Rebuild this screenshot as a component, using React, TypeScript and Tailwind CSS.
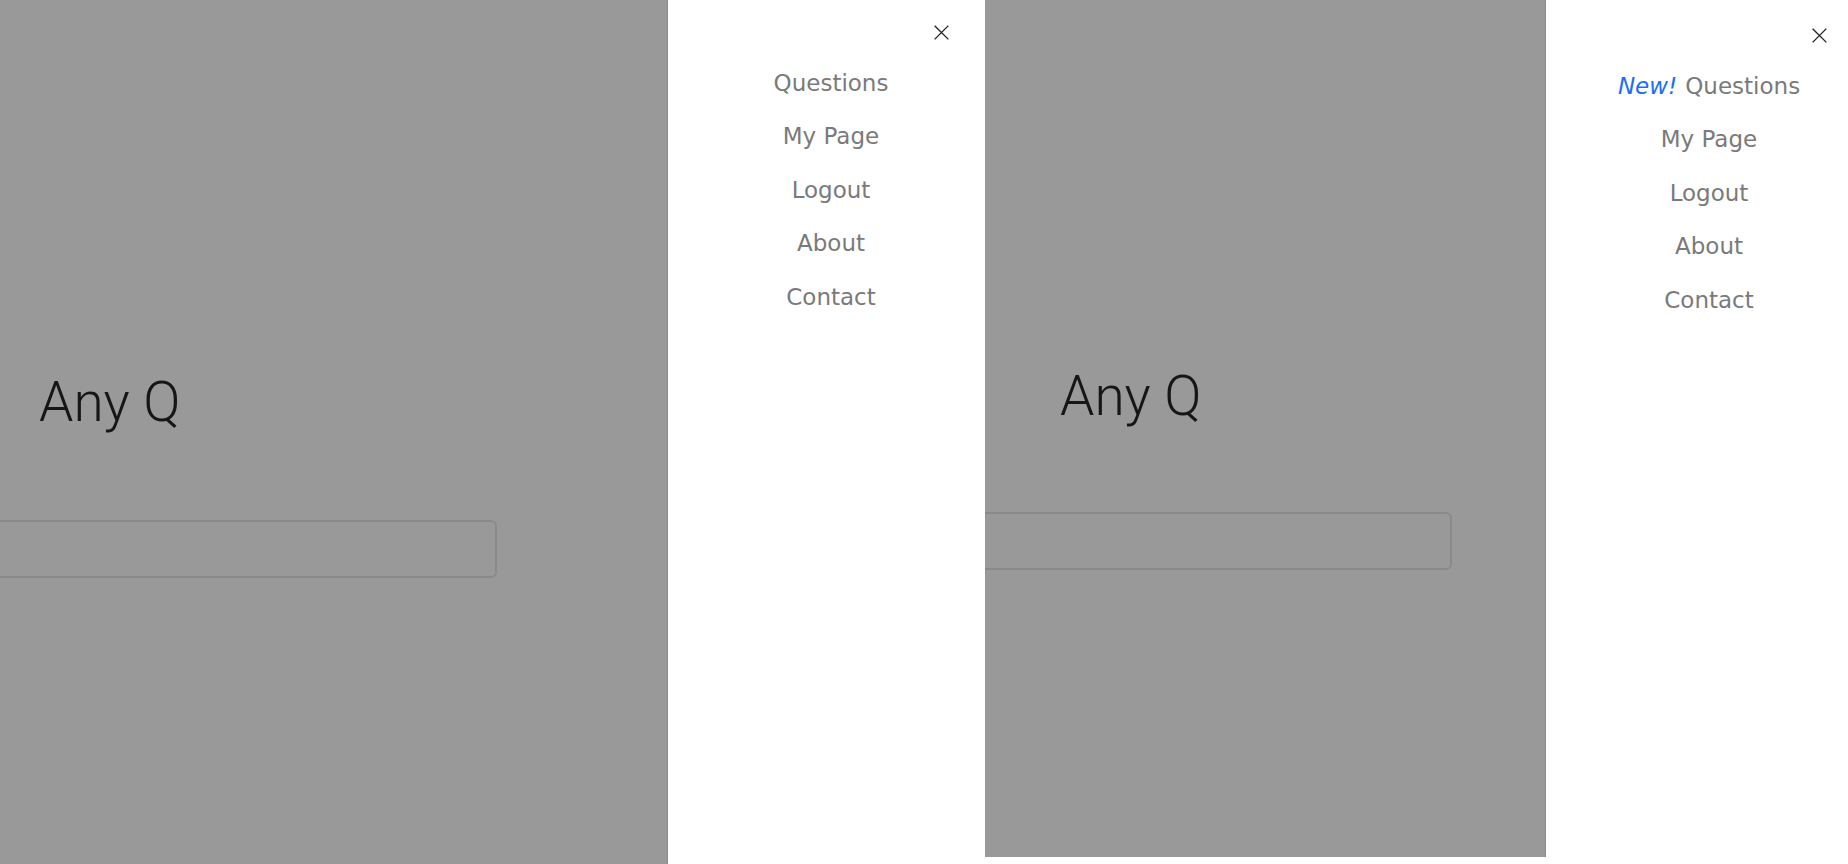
// Two side-by-side captures of the same page with the side drawer open

const links = ["Questions", "My Page", "Logout", "About", "Contact"];

function CloseIcon() {
  return (
    <svg width="17" height="17" viewBox="0 0 16 16" fill="none">
      <path d="M2 2L14 14M14 2L2 14" stroke="#222" strokeWidth="1.3" strokeLinecap="square" />
    </svg>
  );
}

function Drawer({ showNew, top }: { showNew?: boolean; top: number }) {
  return (
    <div className="shrink-0 w-[318px] h-full bg-white border-l border-[#8a8a8a] relative font-['DejaVu_Sans',Verdana,sans-serif]">
      {/* close button */}
      <div className="absolute right-[35px]" style={{ top: top - 33 }}>
        <CloseIcon />
      </div>
      <ul className="flex flex-col items-center pl-[9px]" style={{ paddingTop: top }}>
        {links.map((label, i) => (
          <li key={label} className="leading-[53.4px] text-[23px] text-[#7a7a7a]">
            {i === 0 && showNew && <em className="text-[#1a6ef8] mr-[8px]">New!</em>}
            {label}
          </li>
        ))}
      </ul>
    </div>
  );
}

function Backdrop({
  width,
  titleLeft,
  titleTop,
  inputTop,
  inputRight,
}: {
  width: number;
  titleLeft: number;
  titleTop: number;
  inputTop: number;
  inputRight: number;
}) {
  return (
    <div className="shrink-0 h-full bg-[#999999] overflow-hidden" style={{ width }}>
      <h1
        className="font-['Roboto',sans-serif] font-light text-[55px] leading-none text-[#161616]"
        style={{ paddingLeft: titleLeft, paddingTop: titleTop }}
      >
        Any Q
      </h1>
      <div
        className="h-[58px] border-2 border-[#8a8a8a] rounded-md -ml-[30px]"
        style={{ marginTop: inputTop - titleTop - 55, width: inputRight + 30 }}
      />
    </div>
  );
}

export default function App() {
  return (
    <div className="w-[1848px] h-[864px] bg-white flex overflow-hidden">
      {/* left capture */}
      <div className="w-[985px] h-[864px] shrink-0 flex overflow-hidden">
        <Backdrop width={667} titleLeft={39} titleTop={375} inputTop={520} inputRight={497} />
        <Drawer top={57} />
      </div>

      {/* right capture (drawer cut at the window edge) */}
      <div className="w-[863px] h-[857px] shrink-0 flex overflow-hidden">
        <Backdrop width={560} titleLeft={75} titleTop={369} inputTop={512} inputRight={467} />
        <Drawer showNew top={60} />
      </div>
    </div>
  );
}
